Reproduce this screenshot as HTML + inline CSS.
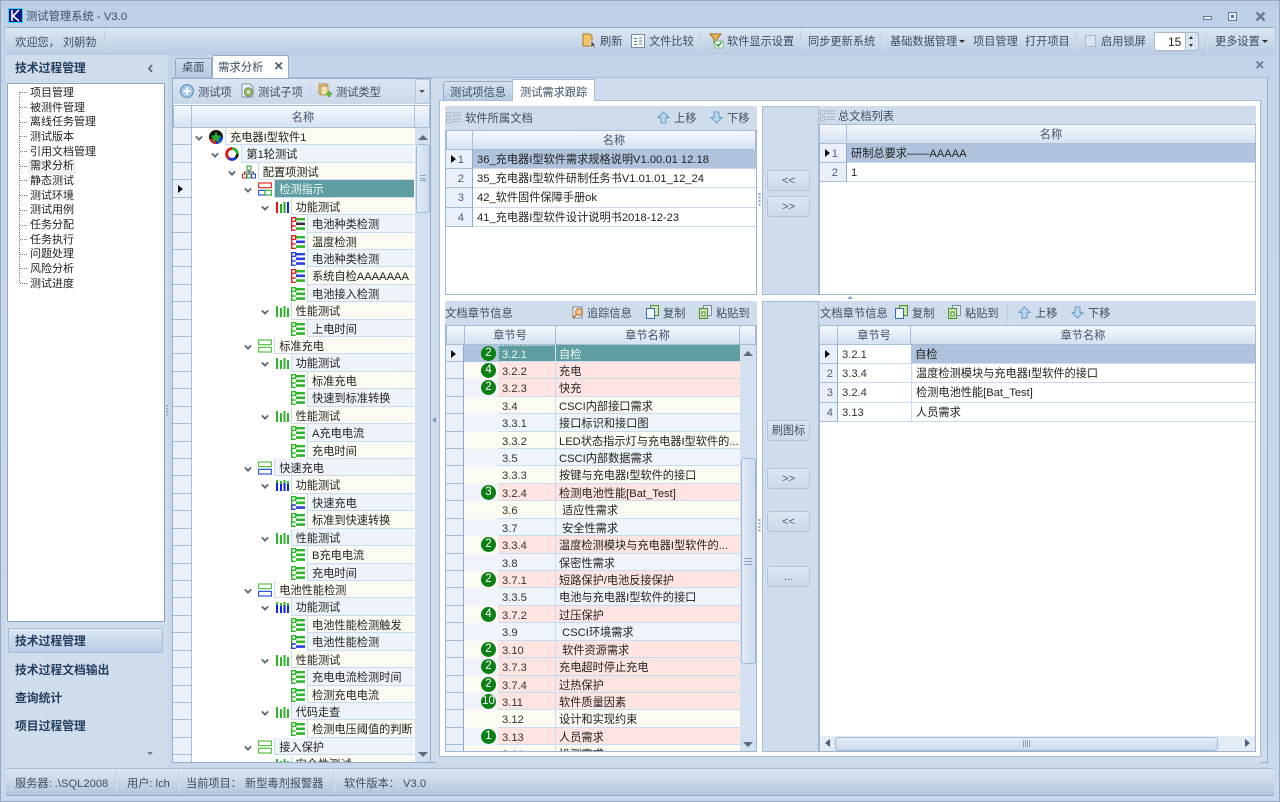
<!DOCTYPE html>
<html lang="zh-CN"><head><meta charset="utf-8"><title>测试管理系统 - V3.0</title>
<style>
*,*::before,*::after{box-sizing:border-box;margin:0;padding:0}
html,body{width:1280px;height:802px;overflow:hidden}
body{position:relative;background:#c9d8ea;font:11.2px/14px "Liberation Sans","Noto Sans CJK SC",sans-serif;color:#222;filter:blur(.35px)}
.a{position:absolute}
.t{position:absolute;white-space:nowrap;line-height:16px;height:16px}
.d{color:#3d4e63;margin-top:1px}
.b{font-weight:bold;color:#243e5e;font-size:11.8px}
.sep{position:absolute;width:2px;background:linear-gradient(90deg,#b3c4d9,#e3ecf6)}
svg{position:absolute;overflow:visible}
.btn{position:absolute;left:767px;width:43px;height:21px;border:1px solid #b4c6dc;border-radius:3px;background:linear-gradient(#dbe6f3,#cbd9ea);text-align:center;line-height:21px;color:#4d5f75}
.gh{position:absolute;background:linear-gradient(#f4f8fd,#d4e1f1);border:1px solid #a8bdd8;text-align:center;line-height:20px;color:#3d4e63}
/* tree */
#tree{position:absolute;left:173px;top:128px;width:242px;height:634px;overflow:hidden;background:#fff}
.r{position:relative;height:17.43px;--l:0}
.r::before{content:"";position:absolute;left:0;top:0;width:19px;height:100%;background:#e9f0fa;border-right:1px solid #a8bdd8;border-bottom:1px solid #a8bdd8}
.r span{position:absolute;left:calc(52px + 16.4px*var(--l));right:1px;top:0;height:100%;padding-left:4px;line-height:20px;background:#eef3fa;border-bottom:1px solid #c9dbf0;border-left:1px solid #c9dbf0;white-space:nowrap;overflow:hidden}
.r.c span{background:#fbfaf3}
.r svg{left:calc(36px + 16.4px*var(--l));top:2px;width:14px;height:14px}
.r i{position:absolute;left:calc(23px + 16.4px*var(--l));top:6px;width:6px;height:6px;border-right:2px solid #5d6b80;border-bottom:2px solid #5d6b80;transform:rotate(45deg) scale(.9)}
.l1{--l:1}.l2{--l:2}.l3{--l:3}.l4{--l:4}.l5{--l:5}
.r.s span{background:#5f9ea0;color:#f2f7f7}
/* doc grids */
.dr{position:absolute;height:19.4px;line-height:20px;background:#fff;border-bottom:1px solid #c9dbf0;white-space:nowrap;padding-left:4px}
.dg{position:absolute;height:19.4px;background:#e9f0fa;border-right:1px solid #8fa8c8;border-bottom:1px solid #a8bdd8;text-align:right;padding-right:8px;line-height:20px;color:#4a5f7a}
.sl{background:#afc3dc}
/* chapter grid */
#ch{position:absolute;left:446px;top:344.5px;width:294px;height:406px;overflow:hidden;background:#fff}
.q{position:relative;height:17.43px}
.q::before{content:"";position:absolute;left:0;top:0;width:18px;height:100%;background:#e9f0fa;border-right:1px solid #8fa8c8;border-bottom:1px solid #a8bdd8}
.q b{position:absolute;left:18px;width:34px;top:0;height:100%;background:#eff4fb}
.q.c b{background:#fbfaf3}
.q u{position:absolute;left:35px;top:1px;width:15px;height:15px;border-radius:7.5px;background:#0a7f14;color:#fff;text-align:center;line-height:15px;text-decoration:none;font-size:11.5px}
.q p,.q span{position:absolute;top:0;height:100%;background:#eff4fb;border-bottom:1px solid #c9dbf0;line-height:20px;white-space:nowrap;overflow:hidden}
.q p{left:52px;width:58px;padding-left:4px;border-right:1px solid #c9dbf0;color:#333}
.q span{left:110px;width:184px;padding-left:3px}
.q.c p,.q.c span{background:#fbfaf3}
.q.k p,.q.k span{background:#ffe4e1}
.q.s b{background:#afc3dc}
.q.s p,.q.s span{background:#5f9ea0;color:#eef6f6}
.q.s p{outline:1px dotted #d8e8e8;outline-offset:-1px}
.tri{position:absolute;width:0;height:0;border-left:5px solid #111;border-top:4px solid transparent;border-bottom:4px solid transparent}
.sb{position:absolute;background:#d3e0f0}
.th{position:absolute;background:linear-gradient(90deg,#e3ecf7,#cbdaec);border:1px solid #a3bad6;border-radius:3px}
.up,.dn{position:absolute;width:0;height:0;border-left:5px solid transparent;border-right:5px solid transparent}
.up{border-bottom:5px solid #5d6b80}.dn{border-top:5px solid #5d6b80}
</style></head><body>
<svg width="0" height="0" style="position:absolute">
<defs>
<symbol id="eg" viewBox="0 0 14 14"><path d="M.7.7h4v3.6h-4zM.7 4.3v9h4M.7 9h4" fill="none" stroke="#2fb52a" stroke-width="1.4"/><path d="M5 1h9v2.4H5zM5 5.500h9v2.6H5zM5 10.300h9v2.6H5z" fill="#2fb52a"/></symbol>
<symbol id="eb" viewBox="0 0 14 14"><path d="M.7.7h4v3.6h-4zM.7 4.3v9h4M.7 9h4" fill="none" stroke="#2a3fe0" stroke-width="1.4"/><path d="M5 1h9v2.4H5zM5 5.500h9v2.6H5zM5 10.300h9v2.6H5z" fill="#2a3fe0"/></symbol>
<symbol id="egb" viewBox="0 0 14 14"><path d="M.7.7h4v3.6h-4zM.7 4.3v4.7h4" fill="none" stroke="#2fb52a" stroke-width="1.4"/><path d="M.7 9v4.3h4M.7 9h4" fill="none" stroke="#2a3fe0" stroke-width="1.4"/><path d="M5 1h9v2.4H5zM5 5.500h9v2.6H5z" fill="#2fb52a"/><path d="M5 10.300h9v2.6H5z" fill="#2a3fe0"/></symbol>
<symbol id="ebg" viewBox="0 0 14 14"><path d="M.7.7h4v3.6h-4zM.7 4.3v4.7h4" fill="none" stroke="#2a3fe0" stroke-width="1.4"/><path d="M.7 9v4.3h4M.7 9h4" fill="none" stroke="#2fb52a" stroke-width="1.4"/><path d="M5 1h9v2.4H5zM5 5.500h9v2.6H5z" fill="#2a3fe0"/><path d="M5 10.300h9v2.6H5z" fill="#2fb52a"/></symbol>
<symbol id="er" viewBox="0 0 14 14"><path d="M.7.7h4v3.6h-4zM.7 4.3v9h4M.7 9h4" fill="none" stroke="#e62020" stroke-width="1.4"/><path d="M5 1h9v2.4H5z" fill="#2fb52a"/><path d="M5 5.500h9v2.6H5z" fill="#333"/><path d="M5 10.300h9v2.6H5z" fill="#2fb52a"/></symbol>
<symbol id="erb" viewBox="0 0 14 14"><path d="M.7.7h4v3.6h-4zM.7 4.3v9h4M.7 9h4" fill="none" stroke="#e62020" stroke-width="1.4"/><path d="M5 1h9v2.4H5z" fill="#2fb52a"/><path d="M5 5.500h9v2.6H5z" fill="#2a3fe0"/><path d="M5 10.300h9v2.6H5z" fill="#2fb52a"/></symbol>
<symbol id="gg" viewBox="0 0 14 14"><path d="M.6 1h12.800v4.600H.6zM.6 8.400h12.800V13H.6z" fill="#fff" stroke="#5cc24a" stroke-width="1.2"/></symbol>
<symbol id="gb" viewBox="0 0 14 14"><path d="M.6 1h12.800v4.600H.6z" fill="#fff" stroke="#5cc24a" stroke-width="1.2"/><path d="M.6 8.400h12.800V13H.6z" fill="#fff" stroke="#3559e0" stroke-width="1.2"/></symbol>
<symbol id="grb" viewBox="0 0 14 14"><path d="M.6 1h12.800v4.600H.6z" fill="#fff" stroke="#e33" stroke-width="1.2"/><path d="M.6 8.400h6.400V13H.6z" fill="#fff" stroke="#3559e0" stroke-width="1.2"/><path d="M7 8.400h6.400V13H7z" fill="#fff" stroke="#3cb53c" stroke-width="1.2"/></symbol>
<symbol id="brgb" viewBox="0 0 14 14"><path d="M1 2h2v11H1z" fill="#e11"/><path d="M5 4h2v9H5z" fill="#2a2"/><path d="M8.500 2h2v11h-2z" fill="#2a2"/><path d="M12 2h2v11h-2z" fill="#12e"/></symbol>
<symbol id="bg" viewBox="0 0 14 14"><path d="M1 2h2v11H1zM5 4h2v9H5zM8.500 2h2v11h-2zM12 4h2v9h-2z" fill="#2fb52a"/></symbol>
<symbol id="bb" viewBox="0 0 14 14"><path d="M1 5h2v8H1zM5 6h2v7H5zM8.500 5h2v8h-2zM12 6h2v7h-2z" fill="#12e"/><path d="M1 2h2v3H1zM5 3h2v3H5zM8.500 2h2v3h-2zM12 3h2v3h-2z" fill="#2fb52a"/></symbol>
</defs>
</svg>

<!-- window -->
<div class="a" style="left:0;top:0;width:1280px;height:802px;background:linear-gradient(#bbcfe6,#c4d4e8 60px,#c9d8ea);border:1px solid #96a9c0"></div>
<svg style="left:8px;top:8px" width="15" height="15"><rect width="15" height="15" fill="#0a1a8a"/><rect x=".5" y=".5" width="14" height="14" fill="none" stroke="#3ad6ee"/><path d="M4 2v11M11 2 5 8l6 5" stroke="#fff" stroke-width="1.6" fill="none"/></svg>
<div class="t d" style="left:26px;top:8px;font-size:11.3px">测试管理系统 - V3.0</div>
<div class="a" style="left:1203px;top:16px;width:9px;height:4px;border:1px solid #6b7c92;background:#e4ecf5"></div>
<div class="a" style="left:1228px;top:12px;width:9px;height:9px;border:1px solid #6b7c92;background:#e4ecf5"></div>
<div class="a" style="left:1231px;top:15px;width:3px;height:3px;background:#6b7c92"></div>
<svg style="left:1255px;top:11px" width="11" height="11"><path d="M1.500 1.500l8 8M9.500 1.500l-8 8" stroke="#6b7c92" stroke-width="2.4"/></svg>

<!-- toolbar -->
<div class="a" style="left:6px;top:27px;width:1268px;height:28px;background:linear-gradient(#dce6f3,#b9cbe1);border-top:1px solid #8ea5c2"></div>
<div class="t d" style="left:15px;top:34px">欢迎您， 刘朝勃</div>
<div class="sep" style="left:104px;top:31px;height:21px"></div>
<svg style="left:582px;top:33px" width="15" height="17"><path d="M1 1h7l2 2v10H1z" fill="#f1c46a" stroke="#a97c2e"/><path d="M9 7v8l2-2 2 3 1-1-2-2h2z" fill="#556" stroke="#fff" stroke-width=".5"/></svg>
<div class="t d" style="left:600px;top:33px">刷新</div>
<svg style="left:631px;top:34px" width="14" height="14"><rect x=".5" y=".5" width="13" height="13" fill="#f4f7fb" stroke="#7d8ea5"/><path d="M3 4h3v1H3zM3 7h3v1H3zM3 10h3v1H3z" fill="#3a9a3a"/><path d="M8 4h3M8 7h3M8 10h3" stroke="#6c7c92"/></svg>
<div class="t d" style="left:649px;top:33px">文件比较</div>
<div class="sep" style="left:700px;top:31px;height:21px"></div>
<svg style="left:709px;top:33px" width="15" height="16"><path d="M1 1h11l-4 5v3l-3 1V6z" fill="#e8b44c" stroke="#9a6f1f"/><rect x="6" y="8" width="8" height="7" fill="#fff" stroke="#7b8"/><path d="M7.500 11l2 2 3-4" stroke="#2a9a2a" stroke-width="1.4" fill="none"/></svg>
<div class="t d" style="left:727px;top:33px">软件显示设置</div>
<div class="sep" style="left:800px;top:31px;height:21px"></div>
<div class="t d" style="left:808px;top:33px">同步更新系统</div>
<div class="sep" style="left:881px;top:31px;height:21px"></div>
<div class="t d" style="left:890px;top:33px">基础数据管理</div>
<div class="a" style="left:959px;top:40px;border-left:3px solid transparent;border-right:3px solid transparent;border-top:3px solid #333"></div>
<div class="t d" style="left:973px;top:33px">项目管理</div>
<div class="t d" style="left:1025px;top:33px">打开项目</div>
<div class="sep" style="left:1076px;top:31px;height:21px"></div>
<div class="a" style="left:1085px;top:35px;width:11px;height:12px;border:1px solid #a7b8cd;background:#d9e3ef"></div>
<div class="t d" style="left:1101px;top:33px">启用锁屏</div>
<div class="a" style="left:1154px;top:32px;width:45px;height:19px;background:#fff;border:1px solid #a7b8cd;border-radius:2px"></div>
<div class="t" style="left:1168px;top:34px;font-size:12px">15</div>
<div class="a" style="left:1185px;top:33px;width:13px;height:17px;background:#dbe5f1;border-left:1px solid #a7b8cd"></div>
<div class="a" style="left:1189px;top:36px;border-left:2.5px solid transparent;border-right:2.5px solid transparent;border-bottom:3px solid #333"></div>
<div class="a" style="left:1189px;top:44px;border-left:2.5px solid transparent;border-right:2.5px solid transparent;border-top:3px solid #333"></div>
<div class="sep" style="left:1206px;top:31px;height:21px"></div>
<div class="t d" style="left:1215px;top:33px">更多设置</div>
<div class="a" style="left:1262px;top:40px;border-left:3px solid transparent;border-right:3px solid transparent;border-top:3px solid #333"></div>

<!-- left panel -->
<div class="a" style="left:6px;top:55px;width:162px;height:713px;background:#cfdcec"></div>
<div class="t b" style="left:15px;top:60px">技术过程管理</div>
<svg style="left:147px;top:64px" width="7" height="9"><path d="M5 1 2 4.500 5 8" fill="none" stroke="#5d6b80" stroke-width="1.8"/></svg>
<div class="a" style="left:7px;top:83px;width:158px;height:539px;background:#fff;border:1px solid #8fa3bd"></div>
<div class="a" style="left:28px;top:159px;width:48px;height:15px;background:#f0f0f0"></div>
<svg style="left:0;top:0" width="40" height="300"><path d="M19.500 92V283M20 92.500h8M20 107.500h8M20 122.500h8M20 136.500h8M20 151.500h8M20 166.500h8M20 180.500h8M20 195.500h8M20 210.500h8M20 225.500h8M20 239.500h8M20 254.500h8M20 268.500h8M20 283.500h8" fill="none" stroke="#777" stroke-dasharray="1 1"/></svg>
<div class="t" style="left:30px;top:85px;font-size:11px">项目管理</div>
<div class="t" style="left:30px;top:100px;font-size:11px">被测件管理</div>
<div class="t" style="left:30px;top:114px;font-size:11px">离线任务管理</div>
<div class="t" style="left:30px;top:129px;font-size:11px">测试版本</div>
<div class="t" style="left:30px;top:144px;font-size:11px">引用文档管理</div>
<div class="t" style="left:30px;top:158px;font-size:11px">需求分析</div>
<div class="t" style="left:30px;top:173px;font-size:11px">静态测试</div>
<div class="t" style="left:30px;top:188px;font-size:11px">测试环境</div>
<div class="t" style="left:30px;top:202px;font-size:11px">测试用例</div>
<div class="t" style="left:30px;top:217px;font-size:11px">任务分配</div>
<div class="t" style="left:30px;top:232px;font-size:11px">任务执行</div>
<div class="t" style="left:30px;top:246px;font-size:11px">问题处理</div>
<div class="t" style="left:30px;top:261px;font-size:11px">风险分析</div>
<div class="t" style="left:30px;top:276px;font-size:11px">测试进度</div>
<div class="a" style="left:8px;top:628px;width:155px;height:25px;background:linear-gradient(#dde7f4,#b9cde5);border:1px solid #a3bcd9;border-radius:2px"></div>
<div class="t b" style="left:15px;top:633px">技术过程管理</div>
<div class="t b" style="left:15px;top:662px">技术过程文档输出</div>
<div class="t b" style="left:15px;top:690px">查询统计</div>
<div class="t b" style="left:15px;top:718px">项目过程管理</div>
<div class="a" style="left:147px;top:752px;border-left:3.5px solid transparent;border-right:3.5px solid transparent;border-top:3px solid #6d7c91"></div>

<!-- main frame -->
<div class="a" style="left:172px;top:77px;width:1096px;height:686px;background:#cfdcec;border:1px solid #96aeca;border-top:1px solid #a9bdd6"></div>
<div class="a" style="left:175px;top:58px;width:37px;height:19px;background:linear-gradient(#cfdcec,#b6c9e0);border:1px solid #94abc8;border-bottom:0;border-radius:3px 0 0 0"></div>
<div class="t d" style="left:182px;top:59px">桌面</div>
<div class="a" style="left:212px;top:55px;width:77px;height:23px;background:#fff;border:1px solid #94abc8;border-bottom:0;border-radius:2px 2px 0 0"></div>
<div class="t d" style="left:218px;top:59px;font-size:11.4px">需求分析</div>
<svg style="left:274px;top:61px" width="10" height="10"><path d="M1.500 1.500l6.500 6.500M8 1.500 1.500 8" stroke="#4f6077" stroke-width="1.7"/></svg>
<svg style="left:1255px;top:60px" width="10" height="10"><path d="M1.500 1.500l6.500 6.500M8 1.500 1.500 8" stroke="#6b7c92" stroke-width="1.7"/></svg>

<!-- tree panel -->
<div class="a" style="left:172px;top:78px;width:259px;height:685px;background:#fff;border:1px solid #96aeca"></div>
<div class="a" style="left:173px;top:79px;width:243px;height:25px;background:linear-gradient(#dae5f2,#c8d7e9)"></div>
<div class="a" style="left:415px;top:79px;width:15px;height:25px;background:linear-gradient(#e3ecf6,#cfdcec);border:1px solid #b5c8de"></div>
<div class="a" style="left:419px;top:90px;border-left:3.5px solid transparent;border-right:3.5px solid transparent;border-top:3.5px solid #555"></div>
<svg style="left:180px;top:84px" width="14" height="14"><circle cx="7" cy="7" r="6.400" fill="#a9cdea" stroke="#4f86b8"/><path d="M7 3.500v7M3.500 7h7" stroke="#fff" stroke-width="2"/></svg>
<div class="t d" style="left:198px;top:84px">测试项</div>
<svg style="left:241px;top:83px" width="14" height="15"><path d="M1 1h8l3 3v10H1z" fill="#eef3f8" stroke="#7f93ad"/><circle cx="7.500" cy="9" r="4.200" fill="#9cbb6e" stroke="#6f8f48"/><circle cx="7.500" cy="9" r="1.600" fill="#dce8c8"/></svg>
<div class="t d" style="left:258px;top:84px">测试子项</div>
<div class="sep" style="left:310px;top:82px;height:19px"></div>
<svg style="left:318px;top:83px" width="15" height="15"><rect x="1" y="1" width="8" height="10" fill="#f2d593" stroke="#b0894a"/><rect x="3" y="3" width="7" height="9" fill="#f7e3b0" stroke="#b0894a"/><path d="M8 11h6M11 8v6" stroke="#5cb53a" stroke-width="2.400"/></svg>
<div class="t d" style="left:336px;top:84px">测试类型</div>
<div class="gh" style="left:173px;top:105px;width:19px;height:23px"></div>
<div class="gh" style="left:191px;top:105px;width:224px;height:23px;line-height:25px">名称</div>
<div class="gh" style="left:414px;top:105px;width:16px;height:23px"></div>

<div id="tree">
<div class="r c"><i></i><svg viewBox="0 0 14 14"><circle cx="7" cy="7" r="7" fill="#111"/><path d="M7 7 14 7A7 7 0 0 1 7 14z" fill="#1d3bd6"/><path d="M7 7 7 14A7 7 0 0 1 .5 9z" fill="#d81e1e"/><path d="M7 1.500 8.600 5.400 12.800 5.700 9.600 8.400 10.600 12.500 7 10.300 3.400 12.500 4.400 8.400 1.200 5.700 5.400 5.400z" fill="#1fae2a"/></svg><span>充电器I型软件1</span></div>
<div class="r l1"><i></i><svg viewBox="0 0 14 14"><circle cx="7" cy="7" r="5.400" fill="none" stroke="#111" stroke-width="2.600"/><path d="M7 1.600A5.400 5.400 0 0 0 1.600 7 5.400 5.400 0 0 0 7 12.400" fill="none" stroke="#e01a1a" stroke-width="2.600"/><path d="M7 1.600A5.400 5.400 0 0 1 12.400 7" fill="none" stroke="#2db52d" stroke-width="2.600"/><path d="M4 11.600A5.400 5.400 0 0 0 11 10.600" fill="none" stroke="#1d3bd6" stroke-width="2.600"/></svg><span>第1轮测试</span></div>
<div class="r c l2"><i></i><svg viewBox="0 0 14 14"><rect x="5" y="1" width="4" height="4" fill="none" stroke="#2a9a2a"/><rect x=".5" y="9" width="4" height="4" fill="none" stroke="#e02020"/><rect x="5" y="9" width="4" height="4" fill="none" stroke="#2a9a2a"/><rect x="9.500" y="9" width="4" height="4" fill="none" stroke="#2a3fe0"/><path d="M7 5v4M2.500 9V7h9v2" stroke="#555" fill="none"/></svg><span>配置项测试</span></div>
<div class="r s l3"><i></i><svg><use href="#grb"/></svg><span>检测指示</span></div>
<div class="r c l4"><i></i><svg><use href="#brgb"/></svg><span>功能测试</span></div>
<div class="r l5"><svg><use href="#er"/></svg><span>电池种类检测</span></div>
<div class="r c l5"><svg><use href="#erb"/></svg><span>温度检测</span></div>
<div class="r l5"><svg><use href="#eb"/></svg><span>电池种类检测</span></div>
<div class="r c l5"><svg><use href="#erb"/></svg><span>系统自检AAAAAAA</span></div>
<div class="r l5"><svg><use href="#eg"/></svg><span>电池接入检测</span></div>
<div class="r c l4"><i></i><svg><use href="#bg"/></svg><span>性能测试</span></div>
<div class="r l5"><svg><use href="#eg"/></svg><span>上电时间</span></div>
<div class="r c l3"><i></i><svg><use href="#gg"/></svg><span>标准充电</span></div>
<div class="r l4"><i></i><svg><use href="#bg"/></svg><span>功能测试</span></div>
<div class="r c l5"><svg><use href="#eg"/></svg><span>标准充电</span></div>
<div class="r l5"><svg><use href="#eg"/></svg><span>快速到标准转换</span></div>
<div class="r c l4"><i></i><svg><use href="#bg"/></svg><span>性能测试</span></div>
<div class="r l5"><svg><use href="#eg"/></svg><span>A充电电流</span></div>
<div class="r c l5"><svg><use href="#eg"/></svg><span>充电时间</span></div>
<div class="r l3"><i></i><svg><use href="#gb"/></svg><span>快速充电</span></div>
<div class="r c l4"><i></i><svg><use href="#bb"/></svg><span>功能测试</span></div>
<div class="r l5"><svg><use href="#egb"/></svg><span>快速充电</span></div>
<div class="r c l5"><svg><use href="#eg"/></svg><span>标准到快速转换</span></div>
<div class="r l4"><i></i><svg><use href="#bg"/></svg><span>性能测试</span></div>
<div class="r c l5"><svg><use href="#eg"/></svg><span>B充电电流</span></div>
<div class="r l5"><svg><use href="#eg"/></svg><span>充电时间</span></div>
<div class="r c l3"><i></i><svg><use href="#gb"/></svg><span>电池性能检测</span></div>
<div class="r l4"><i></i><svg><use href="#bb"/></svg><span>功能测试</span></div>
<div class="r c l5"><svg><use href="#eg"/></svg><span>电池性能检测触发</span></div>
<div class="r l5"><svg><use href="#egb"/></svg><span>电池性能检测</span></div>
<div class="r c l4"><i></i><svg><use href="#bg"/></svg><span>性能测试</span></div>
<div class="r l5"><svg><use href="#eg"/></svg><span>充电电流检测时间</span></div>
<div class="r c l5"><svg><use href="#eg"/></svg><span>检测充电电流</span></div>
<div class="r l4"><i></i><svg><use href="#bg"/></svg><span>代码走查</span></div>
<div class="r c l5"><svg><use href="#eg"/></svg><span>检测电压阈值的判断</span></div>
<div class="r l3"><i></i><svg><use href="#gg"/></svg><span>接入保护</span></div>
<div class="r c l4"><i></i><svg><use href="#bg"/></svg><span>安全性测试</span></div>
</div>
<div class="tri" style="left:178px;top:185px"></div>
<div class="sb" style="left:415px;top:128px;width:15px;height:634px"></div>
<div class="up" style="left:418px;top:135px"></div>
<div class="th" style="left:416px;top:144px;width:14px;height:69px"></div>
<div class="a" style="left:420px;top:175px;width:6px;height:6px;border-top:1px solid #8ea3bf;border-bottom:1px solid #8ea3bf;background:linear-gradient(transparent 2px,#8ea3bf 2px,#8ea3bf 3px,transparent 3px)"></div>
<div class="dn" style="left:418px;top:752px"></div>

<!-- splitters -->
<svg style="left:166px;top:404px" width="4" height="14"><path d="M1 1v12" stroke="#8ea3bf" stroke-width="2" stroke-dasharray="1.500 1.500"/></svg>
<div class="a" style="left:432px;top:417px;border-right:4px solid #7f93ad;border-top:3px solid transparent;border-bottom:3px solid transparent"></div>

<!-- middle panel -->
<div class="a" style="left:437px;top:78px;width:824px;height:685px;background:#cfdcec"></div>
<div class="a" style="left:443px;top:81px;width:70px;height:20px;background:linear-gradient(#d5e1ef,#b6c9e0);border:1px solid #94abc8;border-bottom:0;border-radius:3px 0 0 0"></div>
<div class="t d" style="left:450px;top:84px">测试项信息</div>
<div class="a" style="left:439px;top:100px;width:822px;height:657px;background:#fff;border:1px solid #a5bbd6"></div>
<div class="a" style="left:512px;top:79px;width:83px;height:22px;background:#fff;border:1px solid #a5bbd6;border-bottom:0"></div>
<div class="t d" style="left:520px;top:84px">测试需求跟踪</div>

<!-- top-left doc grid -->
<div class="a" style="left:445px;top:106px;width:312px;height:24px;background:#cfdcec"></div>
<svg style="left:446px;top:112px" width="15" height="12"><path d="M.5.5h4v4h-4zM.5 7h4v4h-4z" fill="none" stroke="#aab4c2"/><path d="M6 1h9M6 3.500h9M6 7h9M6 9.500h9" stroke="#aab4c2"/></svg>
<div class="t d" style="left:465px;top:110px;font-size:11.3px">软件所属文档</div>
<svg style="left:657px;top:111px" width="13" height="13"><path d="M6.500 1 12 6.500H9V12H4V6.500H1z" fill="#b8d8ef" stroke="#6a9cc4"/></svg>
<div class="t d" style="left:674px;top:110px">上移</div>
<svg style="left:710px;top:111px" width="13" height="13"><path d="M6.500 12 12 6.500H9V1H4v5.500H1z" fill="#b8d8ef" stroke="#6a9cc4"/></svg>
<div class="t d" style="left:727px;top:110px">下移</div>
<div class="a" style="left:445px;top:130px;width:312px;height:165px;background:#fff;border:1px solid #9fb6d2"></div>
<div class="gh" style="left:446px;top:130px;width:27px;height:20px"></div>
<div class="gh" style="left:472px;top:130px;width:284px;height:20px">名称</div>
<div class="dg" style="left:446px;top:149.5px;width:27px;text-align:right">1</div><div class="tri" style="left:451px;top:155px"></div>
<div class="dr sl" style="left:473px;top:149.5px;width:283px">36_充电器I型软件需求规格说明V1.00.01 12.18</div>
<div class="dg" style="left:446px;top:168.9px;width:27px">2</div>
<div class="dr" style="left:473px;top:168.9px;width:283px">35_充电器I型软件研制任务书V1.01.01_12_24</div>
<div class="dg" style="left:446px;top:188.3px;width:27px">3</div>
<div class="dr" style="left:473px;top:188.3px;width:283px">42_软件固件保障手册ok</div>
<div class="dg" style="left:446px;top:207.7px;width:27px">4</div>
<div class="dr" style="left:473px;top:207.7px;width:283px">41_充电器I型软件设计说明书2018-12-23</div>

<svg style="left:758px;top:192px" width="3" height="16"><path d="M1.500 1v14" stroke="#8ea3bf" stroke-width="2" stroke-dasharray="2 1.500"/></svg>

<!-- center column top -->
<div class="a" style="left:762px;top:106px;width:57px;height:189px;background:#cfdcec;border:1px solid #a5bbd6"></div>
<div class="btn" style="top:170px">&lt;&lt;</div>
<div class="btn" style="top:196px">&gt;&gt;</div>

<!-- top-right grid -->
<div class="a" style="left:819px;top:106px;width:437px;height:19px;background:#cfdcec"></div>
<svg style="left:820px;top:110px" width="15" height="12"><path d="M.5.5h4v4h-4zM.5 7h4v4h-4z" fill="none" stroke="#aab4c2"/><path d="M6 1h9M6 3.500h9M6 7h9M6 9.500h9" stroke="#aab4c2"/></svg>
<div class="t d" style="left:838px;top:108px">总文档列表</div>
<div class="a" style="left:819px;top:124px;width:437px;height:171px;background:#fff;border:1px solid #9fb6d2"></div>
<div class="gh" style="left:819px;top:124px;width:28px;height:20px"></div>
<div class="gh" style="left:846px;top:124px;width:410px;height:20px">名称</div>
<div class="dg" style="left:820px;top:143.5px;width:27px">1</div><div class="tri" style="left:825px;top:149px"></div>
<div class="dr sl" style="left:847px;top:143.5px;width:408px">研制总要求——AAAAA</div>
<div class="dg" style="left:820px;top:162.9px;width:27px">2</div>
<div class="dr" style="left:847px;top:162.9px;width:408px">1</div>

<!-- bottom-left chapter grid -->
<div class="a" style="left:445px;top:301px;width:312px;height:25px;background:#cfdcec"></div>
<div class="t d" style="left:445px;top:305px;font-size:11.3px">文档章节信息</div>
<svg style="left:572px;top:306px" width="13" height="13"><path d="M1 1h9v11H1z" fill="#f6f1e4" stroke="#7d8ea5"/><circle cx="7" cy="6" r="3.400" fill="#f2c78b" stroke="#b0702a"/><path d="M4 9 1 12" stroke="#b0702a" stroke-width="1.500"/></svg>
<div class="t d" style="left:587px;top:305px">追踪信息</div>
<svg style="left:646px;top:305px" width="13" height="14"><path d="M4.500 .5h8v10h-8z" fill="#cbe5b4" stroke="#4e8f32"/><path d="M.5 3.500h8v10h-8z" fill="#eef5fb" stroke="#3c6fa8"/></svg>
<div class="t d" style="left:663px;top:305px">复制</div>
<svg style="left:699px;top:305px" width="13" height="14"><path d="M4.500 .5h8v10h-8z" fill="#dfe8f2" stroke="#7d8ea5"/><path d="M.5 3.500h8v10h-8z" fill="#cbe5b4" stroke="#4e8f32"/><rect x="3" y="7" width="3" height="4" fill="#fff" stroke="#4e8f32"/></svg>
<div class="t d" style="left:716px;top:305px">粘贴到</div>
<div class="a" style="left:445px;top:325px;width:312px;height:427px;background:#fff;border:1px solid #9fb6d2"></div>
<div class="gh" style="left:446px;top:325px;width:19px;height:20px"></div>
<div class="gh" style="left:464px;top:325px;width:92px;height:20px">章节号</div>
<div class="gh" style="left:555px;top:325px;width:185px;height:20px">章节名称</div>
<div class="gh" style="left:739px;top:325px;width:17px;height:20px"></div>
<div id="ch">
<div class="q s"><b></b><u>2</u><p>3.2.1</p><span>自检</span></div>
<div class="q k c"><b></b><u>4</u><p>3.2.2</p><span>充电</span></div>
<div class="q k"><b></b><u>2</u><p>3.2.3</p><span>快充</span></div>
<div class="q c"><b></b><p>3.4</p><span>CSCI内部接口需求</span></div>
<div class="q"><b></b><p>3.3.1</p><span>接口标识和接口图</span></div>
<div class="q c"><b></b><p>3.3.2</p><span>LED状态指示灯与充电器I型软件的...</span></div>
<div class="q"><b></b><p>3.5</p><span>CSCI内部数据需求</span></div>
<div class="q c"><b></b><p>3.3.3</p><span>按键与充电器I型软件的接口</span></div>
<div class="q k"><b></b><u>3</u><p>3.2.4</p><span>检测电池性能[Bat_Test]</span></div>
<div class="q c"><b></b><p>3.6</p><span>&nbsp;适应性需求</span></div>
<div class="q"><b></b><p>3.7</p><span>&nbsp;安全性需求</span></div>
<div class="q k c"><b></b><u>2</u><p>3.3.4</p><span>温度检测模块与充电器I型软件的...</span></div>
<div class="q"><b></b><p>3.8</p><span>保密性需求</span></div>
<div class="q k c"><b></b><u>2</u><p>3.7.1</p><span>短路保护/电池反接保护</span></div>
<div class="q"><b></b><p>3.3.5</p><span>电池与充电器I型软件的接口</span></div>
<div class="q k c"><b></b><u>4</u><p>3.7.2</p><span>过压保护</span></div>
<div class="q"><b></b><p>3.9</p><span>&nbsp;CSCI环境需求</span></div>
<div class="q k c"><b></b><u>2</u><p>3.10</p><span>&nbsp;软件资源需求</span></div>
<div class="q k"><b></b><u>2</u><p>3.7.3</p><span>充电超时停止充电</span></div>
<div class="q k c"><b></b><u>2</u><p>3.7.4</p><span>过热保护</span></div>
<div class="q k"><b></b><u>10</u><p>3.11</p><span>软件质量因素</span></div>
<div class="q c"><b></b><p>3.12</p><span>设计和实现约束</span></div>
<div class="q k"><b></b><u>1</u><p>3.13</p><span>人员需求</span></div>
<div class="q c"><b></b><p>3.14</p><span>操测需求</span></div>
</div>
<div class="tri" style="left:451px;top:350px"></div>
<div class="sb" style="left:740px;top:345px;width:16px;height:406px"></div>
<div class="up" style="left:743px;top:351px"></div>
<div class="th" style="left:741px;top:458px;width:15px;height:206px"></div>
<div class="a" style="left:744px;top:558px;width:8px;height:7px;border-top:1px solid #8ea3bf;border-bottom:1px solid #8ea3bf;background:linear-gradient(transparent 2px,#8ea3bf 2px,#8ea3bf 3px,transparent 3px)"></div>
<div class="dn" style="left:743px;top:742px"></div>

<svg style="left:758px;top:518px" width="3" height="16"><path d="M1.500 1v14" stroke="#8ea3bf" stroke-width="2" stroke-dasharray="2 1.500"/></svg>
<div class="a" style="left:847px;top:296px;border-left:3px solid transparent;border-right:3px solid transparent;border-bottom:3px solid #8ea3bf"></div>

<!-- center column bottom -->
<div class="a" style="left:762px;top:301px;width:57px;height:451px;background:#cfdcec;border:1px solid #a5bbd6"></div>
<div class="btn" style="top:420px;color:#3d4e63">刷图标</div>
<div class="btn" style="top:468px">&gt;&gt;</div>
<div class="btn" style="top:511px">&lt;&lt;</div>
<div class="btn" style="top:566px">...</div>

<!-- bottom-right grid -->
<div class="a" style="left:819px;top:301px;width:437px;height:25px;background:#cfdcec"></div>
<div class="t d" style="left:820px;top:305px;font-size:11.3px">文档章节信息</div>
<svg style="left:895px;top:305px" width="13" height="14"><path d="M4.500 .5h8v10h-8z" fill="#cbe5b4" stroke="#4e8f32"/><path d="M.5 3.500h8v10h-8z" fill="#eef5fb" stroke="#3c6fa8"/></svg>
<div class="t d" style="left:912px;top:305px">复制</div>
<svg style="left:948px;top:305px" width="13" height="14"><path d="M4.500 .5h8v10h-8z" fill="#dfe8f2" stroke="#7d8ea5"/><path d="M.5 3.500h8v10h-8z" fill="#cbe5b4" stroke="#4e8f32"/><rect x="3" y="7" width="3" height="4" fill="#fff" stroke="#4e8f32"/></svg>
<div class="t d" style="left:965px;top:305px">粘贴到</div>
<div class="sep" style="left:1007px;top:304px;height:19px"></div>
<svg style="left:1018px;top:306px" width="13" height="13"><path d="M6.500 1 12 6.500H9V12H4V6.500H1z" fill="#b8d8ef" stroke="#6a9cc4"/></svg>
<div class="t d" style="left:1035px;top:305px">上移</div>
<svg style="left:1071px;top:306px" width="13" height="13"><path d="M6.500 12 12 6.500H9V1H4v5.500H1z" fill="#b8d8ef" stroke="#6a9cc4"/></svg>
<div class="t d" style="left:1088px;top:305px">下移</div>
<div class="a" style="left:819px;top:325px;width:437px;height:427px;background:#fff;border:1px solid #9fb6d2"></div>
<div class="gh" style="left:819px;top:325px;width:19px;height:20px"></div>
<div class="gh" style="left:837px;top:325px;width:74px;height:20px">章节号</div>
<div class="gh" style="left:910px;top:325px;width:346px;height:20px">章节名称</div>
<div class="dg" style="left:820px;top:344.5px;width:18px"></div><div class="tri" style="left:825px;top:350px"></div>
<div class="dr" style="left:838px;top:344.5px;width:73px;color:#333">3.2.1</div>
<div class="dr sl" style="left:911px;top:344.5px;width:344px">自检</div>
<div class="dg" style="left:820px;top:363.9px;width:18px;padding-right:4px">2</div>
<div class="dr" style="left:838px;top:363.9px;width:73px;color:#333">3.3.4</div>
<div class="dr" style="left:911px;top:363.9px;width:344px;border-left:1px solid #c9dbf0">温度检测模块与充电器I型软件的接口</div>
<div class="dg" style="left:820px;top:383.3px;width:18px;padding-right:4px">3</div>
<div class="dr" style="left:838px;top:383.3px;width:73px;color:#333">3.2.4</div>
<div class="dr" style="left:911px;top:383.3px;width:344px;border-left:1px solid #c9dbf0">检测电池性能[Bat_Test]</div>
<div class="dg" style="left:820px;top:402.7px;width:18px;padding-right:4px">4</div>
<div class="dr" style="left:838px;top:402.7px;width:73px;color:#333">3.13</div>
<div class="dr" style="left:911px;top:402.7px;width:344px;border-left:1px solid #c9dbf0">人员需求</div>
<div class="sb" style="left:820px;top:736px;width:435px;height:15px;background:#e3ebf5"></div>
<div class="a" style="left:825px;top:739px;border-right:5px solid #4b5f78;border-top:4px solid transparent;border-bottom:4px solid transparent"></div>
<div class="a" style="left:1245px;top:739px;border-left:5px solid #4b5f78;border-top:4px solid transparent;border-bottom:4px solid transparent"></div>
<div class="th" style="left:835px;top:737px;width:383px;height:14px;background:linear-gradient(#e3ecf7,#cbdaec)"></div>
<div class="a" style="left:1023px;top:740px;width:7px;height:7px;background:repeating-linear-gradient(90deg,#8ea3bf 0 1px,transparent 1px 2px)"></div>

<!-- status bar -->
<div class="a" style="left:6px;top:768px;width:1268px;height:28px;background:linear-gradient(#dde7f4,#b3c6dc);border-top:1px solid #a9bdd6;border-bottom:1px solid #8ea5c2"></div>
<div class="t d" style="left:15px;top:775px">服务器: .\SQL2008</div>
<div class="sep" style="left:115px;top:771px;height:22px"></div>
<div class="t d" style="left:127px;top:775px">用户: lch</div>
<div class="sep" style="left:178px;top:771px;height:22px"></div>
<div class="t d" style="left:186px;top:775px">当前项目：</div>
<div class="t d" style="left:245px;top:775px">新型毒剂报警器</div>
<div class="sep" style="left:333px;top:771px;height:22px"></div>
<div class="t d" style="left:344px;top:775px">软件版本： V3.0</div>
</body></html>
